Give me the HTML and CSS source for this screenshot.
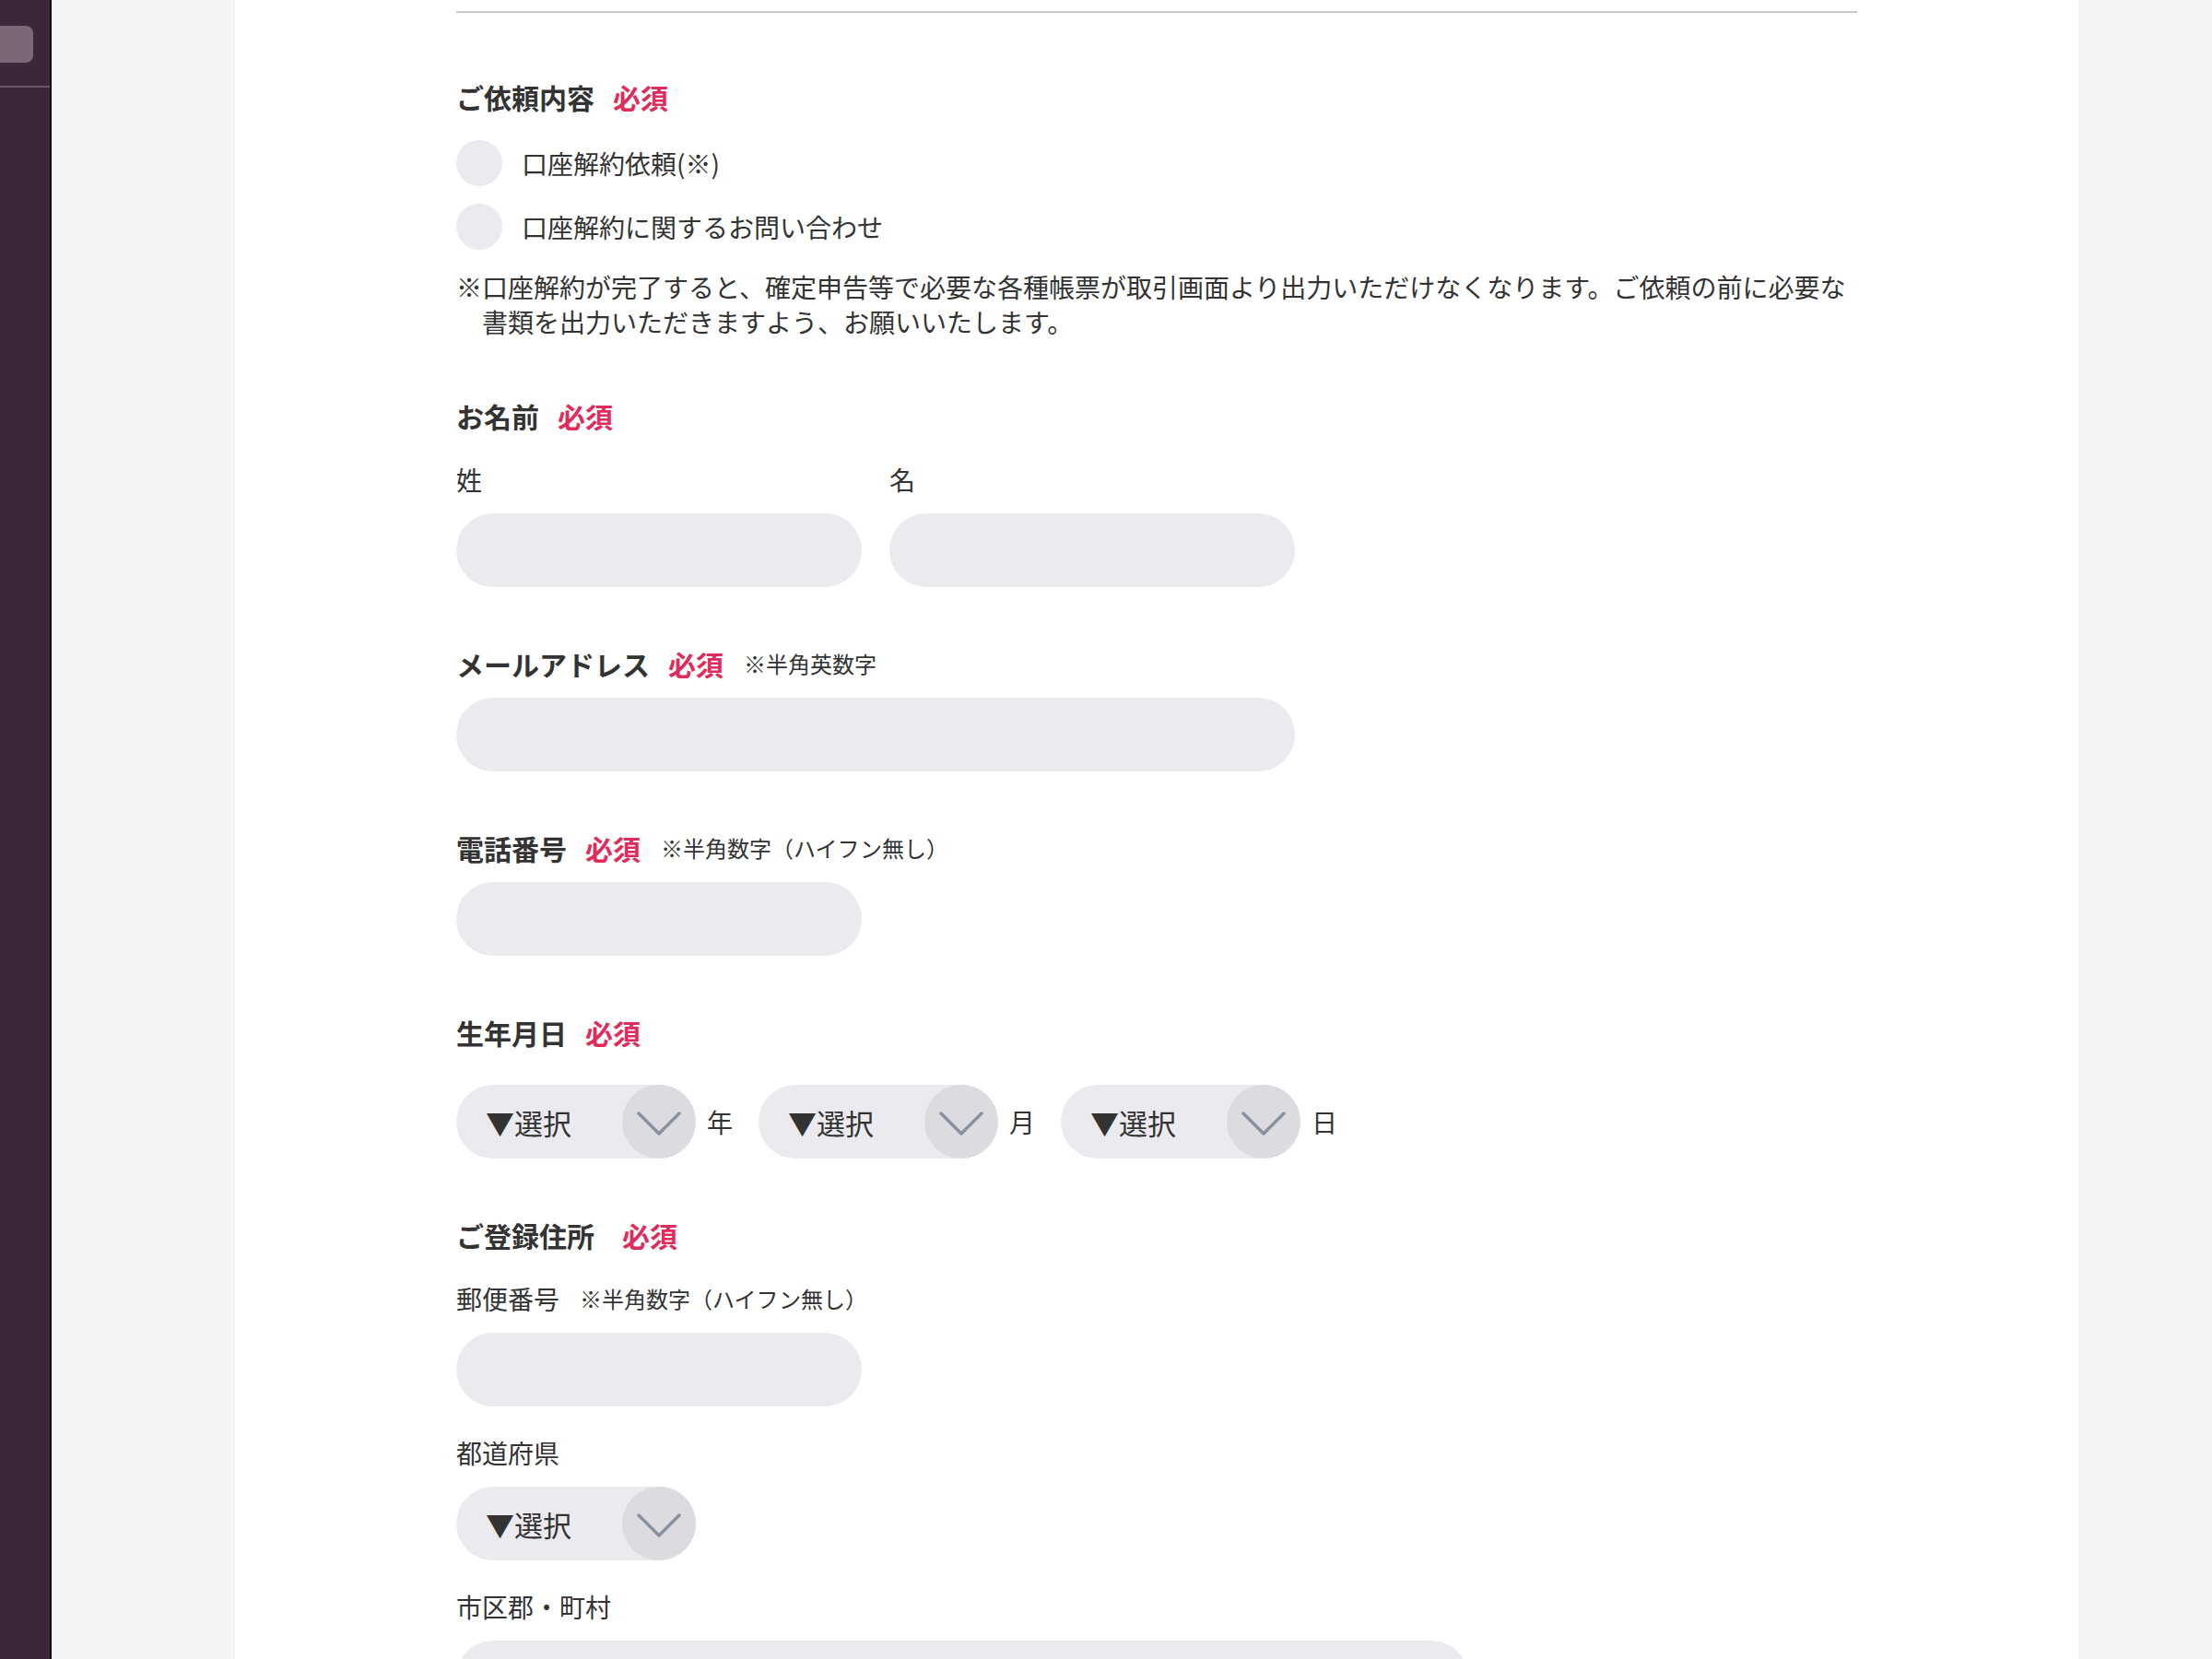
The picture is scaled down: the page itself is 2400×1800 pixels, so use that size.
FILE: index.html
```html
<!DOCTYPE html>
<html lang="ja">
<head>
  <meta charset="UTF-8">
  <title>口座解約のお問い合わせ</title>
  <link rel="stylesheet" href="styles.css">
</head>
<body>

  <!-- Side menu -->
  <aside class="sidebar">
    <div class="side-btn"></div>
    <div class="side-rule"></div>
  </aside>

  <main class="page">
    <div class="card">
      <div class="top-rule"></div>

      <!-- ご依頼内容 -->
      <section class="field first">
        <h2 class="field-title">ご依頼内容<span class="req">必須</span></h2>
        <div class="radios">
          <label class="radio-row"><input type="radio" name="request" class="radio">口座解約依頼(※)</label>
          <label class="radio-row"><input type="radio" name="request" class="radio">口座解約に関するお問い合わせ</label>
        </div>
        <p class="note">※口座解約が完了すると、確定申告等で必要な各種帳票が取引画面より出力いただけなくなります。ご依頼の前に必要な書類を出力いただきますよう、お願いいたします。</p>
      </section>

      <!-- お名前 -->
      <section class="field">
        <h2 class="field-title">お名前<span class="req">必須</span></h2>
        <div class="name-row">
          <label class="name-col">
            <span class="sub-label">姓</span>
            <input type="text" class="text-input">
          </label>
          <label class="name-col">
            <span class="sub-label">名</span>
            <input type="text" class="text-input">
          </label>
        </div>
      </section>

      <!-- メールアドレス -->
      <section class="field">
        <h2 class="field-title">メールアドレス<span class="req">必須</span><span class="hint">※半角英数字</span></h2>
        <input type="email" class="text-input wide after-title">
      </section>

      <!-- 電話番号 -->
      <section class="field">
        <h2 class="field-title">電話番号<span class="req">必須</span><span class="hint">※半角数字（ハイフン無し）</span></h2>
        <input type="tel" class="text-input after-title">
      </section>

      <!-- 生年月日 -->
      <section class="field">
        <h2 class="field-title">生年月日<span class="req">必須</span></h2>
        <div class="date-row">
          <div class="select"><span>▼選択</span><span class="chev"><svg width="48" height="26" viewBox="0 0 48 26"><polyline points="2,2 24,24 46,2" fill="none" stroke="#8b90a1" stroke-width="3.5" stroke-linecap="round" stroke-linejoin="round"/></svg></span></div>
          <span class="unit">年</span>
          <div class="select"><span>▼選択</span><span class="chev"><svg width="48" height="26" viewBox="0 0 48 26"><polyline points="2,2 24,24 46,2" fill="none" stroke="#8b90a1" stroke-width="3.5" stroke-linecap="round" stroke-linejoin="round"/></svg></span></div>
          <span class="unit">月</span>
          <div class="select"><span>▼選択</span><span class="chev"><svg width="48" height="26" viewBox="0 0 48 26"><polyline points="2,2 24,24 46,2" fill="none" stroke="#8b90a1" stroke-width="3.5" stroke-linecap="round" stroke-linejoin="round"/></svg></span></div>
          <span class="unit">日</span>
        </div>
      </section>

      <!-- ご登録住所 -->
      <section class="field">
        <h2 class="field-title">ご登録住所<span class="req spaced">必須</span></h2>
        <div class="sub-label first-sub">郵便番号<span class="hint">※半角数字（ハイフン無し）</span></div>
        <input type="text" class="text-input after-label">
        <div class="sub-label">都道府県</div>
        <div class="select after-label"><span>▼選択</span><span class="chev"><svg width="48" height="26" viewBox="0 0 48 26"><polyline points="2,2 24,24 46,2" fill="none" stroke="#8b90a1" stroke-width="3.5" stroke-linecap="round" stroke-linejoin="round"/></svg></span></div>
        <div class="sub-label">市区郡・町村</div>
        <input type="text" class="text-input long after-label">
      </section>
    </div>
  </main>

</body>
</html>
```

FILE: styles.css
```css
body {
  margin: 0;
  display: flex;
  height: 1800px;
  overflow: hidden;
  font-family: "Noto Sans CJK JP", "Noto Sans", sans-serif;
  color: #333;
}
.sidebar {
  width: 54px;
  flex-shrink: 0;
  background: #3b2739;
  border-right: 2px solid #0d0b0d;
}
.side-btn {
  width: 36px;
  height: 40px;
  margin-top: 28px;
  background: #7a6778;
  border-radius: 0 8px 8px 0;
}
.side-rule {
  height: 2px;
  margin-top: 25px;
  background: #6a5668;
}
.page {
  flex: 1;
  background: #f4f4f6;
  padding-left: 199px;
}
.card {
  width: 1520px;
  min-height: 1800px;
  padding: 0 240px;
  background: #fff;
}
.top-rule {
  height: 12px;
  border-bottom: 2px solid #ccc;
}
.field {
  margin-top: 61px;
}
.field.first {
  margin-top: 69px;
}
.field-title {
  display: flex;
  align-items: center;
  margin: 0;
  font-size: 30px;
  line-height: 44px;
  font-weight: bold;
}
.req {
  margin-left: 20px;
  color: #e02c5c;
}
.req.spaced {
  margin-left: 30px;
}
.hint {
  margin-left: 22px;
  font-size: 24px;
  font-weight: normal;
}
.radios {
  display: flex;
  flex-direction: column;
  gap: 19px;
  margin-top: 25px;
}
.radio-row {
  display: flex;
  align-items: center;
  gap: 21px;
  font-size: 28px;
  line-height: 50px;
}
.radio {
  appearance: none;
  width: 50px;
  height: 50px;
  margin: 0;
  border-radius: 50%;
  background: #ebebef;
}
.note {
  margin: 21px 0 0;
  padding-left: 1em;
  text-indent: -1em;
  font-size: 28px;
  line-height: 38px;
}
.name-row {
  display: flex;
  gap: 30px;
  margin-top: 27px;
}
.name-col {
  display: flex;
  flex-direction: column;
  gap: 17px;
}
.sub-label {
  display: flex;
  align-items: center;
  margin-top: 30px;
  font-size: 28px;
  line-height: 40px;
}
.name-col .sub-label,
.sub-label.first-sub {
  margin-top: 0;
}
.sub-label.first-sub {
  margin-top: 27px;
}
.text-input {
  display: block;
  box-sizing: border-box;
  width: 440px;
  height: 80px;
  padding: 0 30px;
  border: none;
  border-radius: 40px;
  background: #ebebef;
  font: inherit;
  font-size: 28px;
}
.text-input.wide {
  width: 910px;
}
.text-input.long {
  width: 1098px;
}
.after-title {
  margin-top: 15px;
}
.after-label {
  margin-top: 17px;
}
.text-input.after-label {
  margin-top: 17px;
}
.date-row {
  display: flex;
  align-items: center;
  margin-top: 35px;
}
.select {
  display: flex;
  align-items: center;
  justify-content: space-between;
  box-sizing: border-box;
  width: 260px;
  height: 80px;
  padding-left: 32px;
  border-radius: 40px;
  background: #ebebef;
  font-size: 31px;
}
.chev {
  display: flex;
  align-items: center;
  justify-content: center;
  width: 80px;
  height: 80px;
  border-radius: 50%;
  background: #dcdce0;
}
.chev svg {
  margin-top: 4px;
}
.unit {
  margin: 0 28px 0 12px;
  font-size: 28px;
}
```
